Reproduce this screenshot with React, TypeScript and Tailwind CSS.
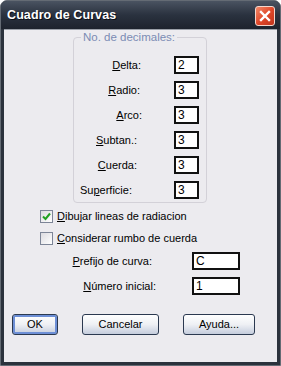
import React from 'react'

const font = "font-['Liberation_Sans',Arial,sans-serif]"

const decimales = [
  { pre: '', u: 'D', post: 'elta:', value: '2', pr: 'pr-[33px]' },
  { pre: '', u: 'R', post: 'adio:', value: '3', pr: 'pr-[34px]' },
  { pre: '', u: 'A', post: 'rco:', value: '3', pr: 'pr-[32px]' },
  { pre: '', u: 'S', post: 'ubtan.:', value: '3', pr: 'pr-[37px]' },
  { pre: '', u: 'C', post: 'uerda:', value: '3', pr: 'pr-[37px]' },
  { pre: 'Su', u: 'p', post: 'erficie:', value: '3', pr: 'pr-[42px]' },
]

export default function App() {
  return (
    <div className={`w-[281px] h-[366px] bg-white ${font} text-[11px] text-black`}>
      <div className="w-full h-full flex flex-col rounded-t-[7px] bg-[#2b323c] border border-[#646b74]">
        {/* Title bar */}
        <div className="h-[28px] flex items-center justify-between pl-[6px] pr-[5px] rounded-t-[6px] bg-gradient-to-b from-[#4a5361] via-[#2a323f] to-[#1d232d]">
          <span className="text-white font-bold text-[12.5px] tracking-[0.1px] [text-shadow:1px_1px_0_#0b0f16] mt-[1px]">
            Cuadro de Curvas
          </span>
          <div className="w-[20px] h-[20px] mt-[1px] rounded-[3px] border border-[#f3d6cc] bg-gradient-to-br from-[#f08868] via-[#e0482a] to-[#c0341c] flex items-center justify-center">
            <svg width="12" height="12" viewBox="0 0 12 12">
              <path d="M2 2 L10 10 M10 2 L2 10" stroke="white" strokeWidth="2.4" strokeLinecap="square" />
            </svg>
          </div>
        </div>

        {/* Client area */}
        <div className="flex-1 mx-[3px] mb-[3px] bg-[#ecebef] border-t border-[#9aa0a8] flex flex-col">
          {/* Group box */}
          <fieldset className="ml-[69px] mt-0 w-[134px] h-[173px] border border-[#d3d1d8] rounded-[4px] flex flex-col">
            <legend className="ml-[7px] px-[2px] text-[#7b8cb4] text-[11.5px] leading-[14px]">No. de decimales:</legend>
            <div className="flex flex-col gap-[7px] mt-[12px]">
              {decimales.map((d) => (
                <div key={d.post} className="flex items-center">
                  <div className={`w-[100px] text-right ${d.pr}`}>
                    {d.pre}
                    <u>{d.u}</u>
                    {d.post}
                  </div>
                  <div className="w-[25px] h-[18px] bg-white border-[2px] border-[#111] pl-[2px] leading-[14px] text-[12px]">
                    {d.value}
                  </div>
                </div>
              ))}
            </div>
          </fieldset>

          {/* Checkboxes */}
          <div className="flex flex-col gap-[8px] mt-[6px] ml-[36px]">
            <Check checked>
              <u>D</u>ibujar lineas de radiacion
            </Check>
            <Check>
              <u>C</u>onsiderar rumbo de cuerda
            </Check>
          </div>

          {/* Prefix fields */}
          <div className="flex flex-col gap-[7px] mt-[7px]">
            <div className="flex items-center">
              <div className="w-[148px] text-right">
                <u>P</u>refijo de curva:
              </div>
              <div className="ml-[40px] w-[48px] h-[18px] bg-white border-[2px] border-[#111] pl-[2px] leading-[14px] text-[12px]">C</div>
            </div>
            <div className="flex items-center">
              <div className="w-[152px] text-right">
                <u>N</u>úmero inicial:
              </div>
              <div className="ml-[36px] w-[48px] h-[18px] bg-white border-[2px] border-[#111] pl-[2px] leading-[14px] text-[12px]">1</div>
            </div>
          </div>

          {/* Buttons */}
          <div className="flex items-start mt-[19px] ml-[8px]">
            <Btn className="w-[46px]" focused>OK</Btn>
            <Btn className="w-[77px] ml-[24px]">Cancelar</Btn>
            <Btn className="w-[72px] ml-[24px]">Ayuda...</Btn>
          </div>
        </div>
      </div>
    </div>
  )
}

function Check({ checked, children }: { checked?: boolean; children: React.ReactNode }) {
  return (
    <div className="flex items-center h-[14px]">
      <div className="w-[13px] h-[13px] border border-[#7d8597] bg-gradient-to-br from-[#dcdbe0] to-white flex items-center justify-center">
        {checked && (
          <svg width="9" height="9" viewBox="0 0 9 9">
            <path d="M1 4.5 L3.5 7 L8 1.5" stroke="#21a121" strokeWidth="2" fill="none" />
          </svg>
        )}
      </div>
      <span className="ml-[4px]">{children}</span>
    </div>
  )
}

function Btn({
  className,
  focused,
  children,
}: {
  className?: string
  focused?: boolean
  children: React.ReactNode
}) {
  return (
    <div
      className={`h-[21px] rounded-[3px] border border-[#2b3950] bg-gradient-to-b from-white via-[#eef0f4] to-[#c5cddd] flex items-center justify-center ${
        focused ? 'shadow-[inset_0_0_0_2px_#6d8fd6]' : ''
      } ${className ?? ''}`}
    >
      {children}
    </div>
  )
}
